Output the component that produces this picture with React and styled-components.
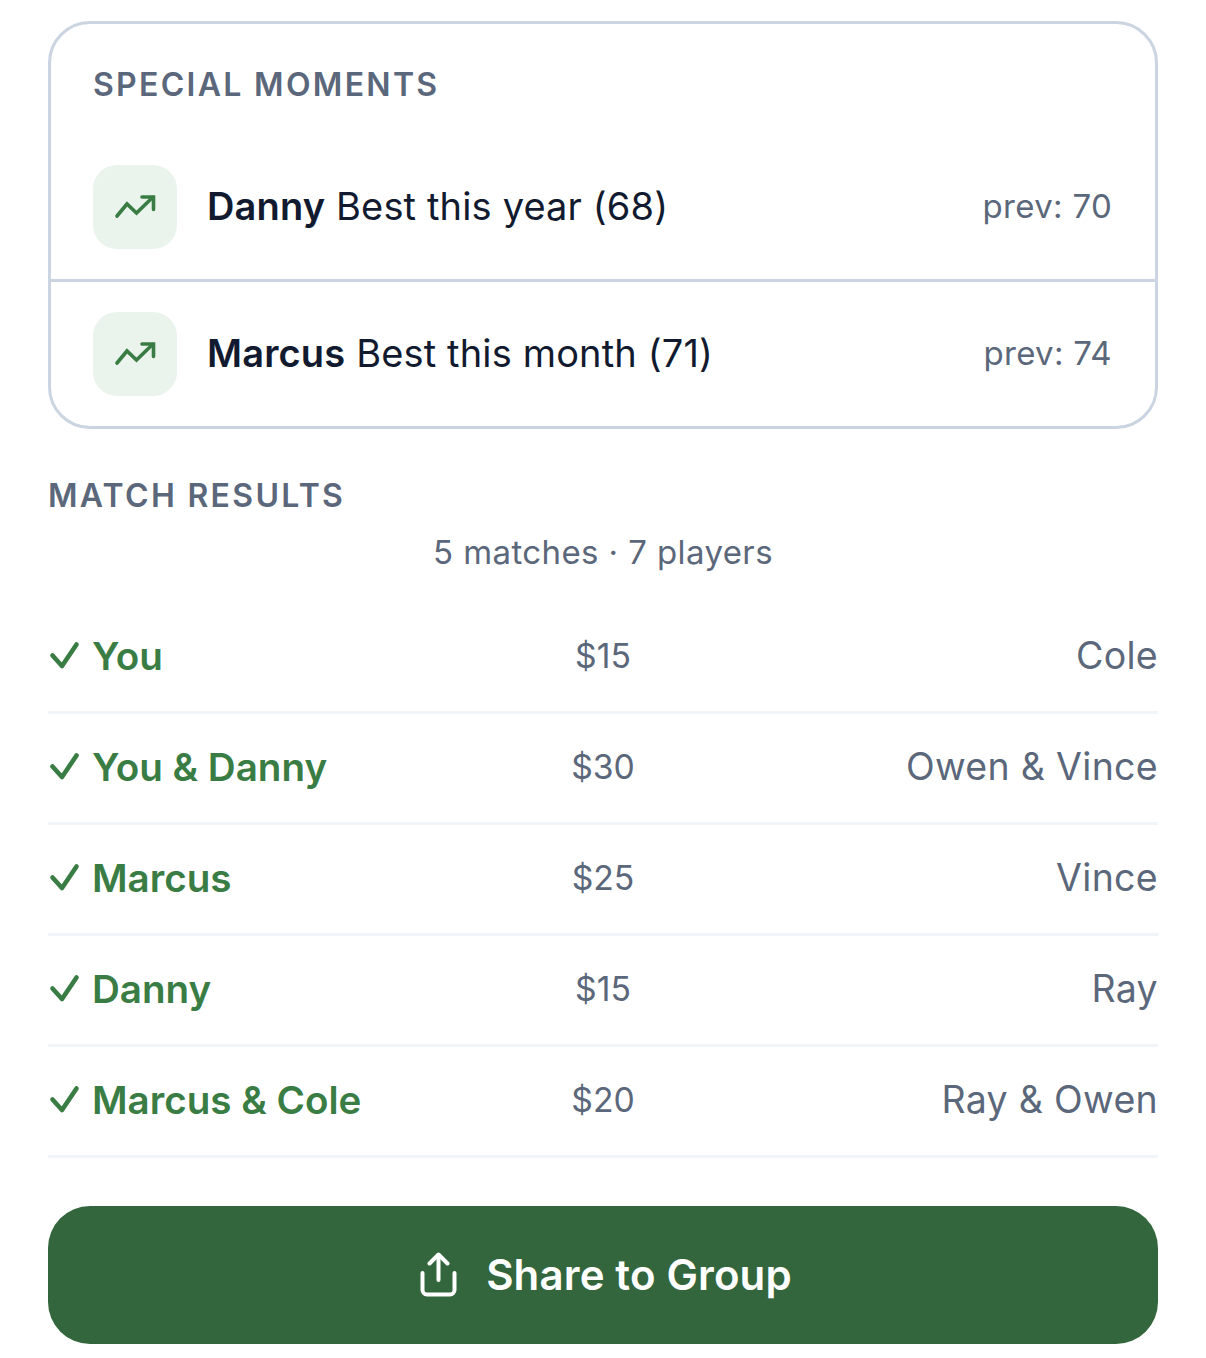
import React from "react";
import styled, { createGlobalStyle } from "styled-components";

const Global = createGlobalStyle`
  html, body { margin: 0; padding: 0; background: #fff; overflow: hidden; }
  body { font-family: Inter, "Liberation Sans", sans-serif; -webkit-font-smoothing: antialiased; }
`;
const Page = styled.main`
  width: 1206px; height: 1358px; box-sizing: border-box; padding: 21px 48px 0;
  display: flex; flex-direction: column;
`;
const Card = styled.section`
  border: 3px solid #cbd5e1; border-radius: 42px; box-sizing: border-box; height: 408px;
  display: flex; flex-direction: column;
`;
const Label = styled.h2`
  margin: 0; font-size: 32px; line-height: 36px; font-weight: 600; letter-spacing: 2.3px; color: #5b677a;
  text-transform: uppercase;
`;
const CardHead = styled.div`
  height: 111px; box-sizing: border-box; padding: 43px 42px 0;
`;
const Moment = styled.div`
  display: flex; align-items: center; padding: 30px 43px 30px 42px; height: 144px; box-sizing: border-box;
  & + & { border-top: 3px solid #cbd5e1; height: 147px; }
`;
const IconTile = styled.div`
  width: 84px; height: 84px; border-radius: 24px; background: #eaf4ec; display: flex;
  align-items: center; justify-content: center; flex: none; margin-right: 30px; color: #3a7d44;
`;
const MomentText = styled.div`
  flex: 1; font-size: 38px; color: #111a2e; padding-bottom: 2px; letter-spacing: 0.15px;
  b { font-weight: 600; }
`;
const Prev = styled.div`
  font-size: 33px; color: #5b677a; letter-spacing: 0.3px; padding-bottom: 2px;
`;
const SectionHead = styled.div`
  margin-top: 49px; height: 36px;
`;
const Summary = styled.div`
  margin-top: 17px; text-align: center; font-size: 33px; line-height: 42px; color: #5b677a; letter-spacing: 0.4px;
`;
const Results = styled.div`
  margin-top: 30px; display: flex; flex-direction: column;
`;
const Row = styled.div`
  height: 111px; box-sizing: border-box; border-bottom: 3px solid #f1f4f8;
  display: grid; grid-template-columns: 1fr auto 1fr; align-items: center; padding-bottom: 3px;
`;
const Winner = styled.div`
  display: flex; align-items: center; gap: 12px; font-size: 38.6px; font-weight: 600; color: #3a7d44;
`;
const Stake = styled.div`
  font-size: 33.7px; color: #5b677a; text-align: center;
`;
const Loser = styled.div`
  font-size: 37.5px; color: #5b677a; text-align: right; letter-spacing: 0.3px;
`;
const ShareButton = styled.button`
  margin-top: 48px; height: 138px; border: 0; border-radius: 42px; background: #33663d; color: #fff;
  display: flex; align-items: center; justify-content: center; gap: 29px; padding: 0 0 2px 6px;
  font-family: inherit; font-size: 42px; font-weight: 600; letter-spacing: 0.15px;
`;

const Trend = () => (
  <svg width="42" height="42" viewBox="0 0 42 42" fill="none" stroke="currentColor" strokeWidth="3.6" strokeLinecap="round" strokeLinejoin="miter">
    <path d="M3 30 13 18 22.5 27 38.5 11.5" />
    <path d="M28 11H39.5V23.5" />
  </svg>
);
const Check = () => (
  <svg width="32" height="33" viewBox="0 0 32 33" fill="none" stroke="currentColor" strokeWidth="4.6" strokeLinecap="round" strokeLinejoin="round">
    <path d="M4.5 16.5 14 27 28.5 5.5" />
  </svg>
);
const Share = () => (
  <svg width="37" height="45" viewBox="0 0 37 45" fill="none" stroke="currentColor" strokeWidth="4" strokeLinecap="round" strokeLinejoin="round">
    <path d="M18.5 28V3" />
    <path d="M9.5 11.5 18.5 2.5l9 9" />
    <path d="M2.5 21v17a4.5 4.5 0 0 0 4.5 4.5h23a4.5 4.5 0 0 0 4.5-4.5V21" />
  </svg>
);

const moments = [
  { n: "Danny", t: "Best this year (68)", p: "prev: 70" },
  { n: "Marcus", t: "Best this month (71)", p: "prev: 74" },
];
const rows = [
  ["You", "$15", "Cole"],
  ["You & Danny", "$30", "Owen & Vince"],
  ["Marcus", "$25", "Vince"],
  ["Danny", "$15", "Ray"],
  ["Marcus & Cole", "$20", "Ray & Owen"],
];

export default function App() {
  return (
    <Page>
      <Global />
      <Card>
        <CardHead><Label>Special Moments</Label></CardHead>
        {moments.map((m) => (
          <Moment key={m.n}>
            <IconTile><Trend /></IconTile>
            <MomentText><b>{m.n}</b> {m.t}</MomentText>
            <Prev>{m.p}</Prev>
          </Moment>
        ))}
      </Card>
      <SectionHead><Label>Match Results</Label></SectionHead>
      <Summary>5 matches · 7 players</Summary>
      <Results>
        {rows.map((r) => (
          <Row key={r[0]}>
            <Winner><Check />{r[0]}</Winner>
            <Stake>{r[1]}</Stake>
            <Loser>{r[2]}</Loser>
          </Row>
        ))}
      </Results>
      <ShareButton><Share />Share to Group</ShareButton>
    </Page>
  );
}
